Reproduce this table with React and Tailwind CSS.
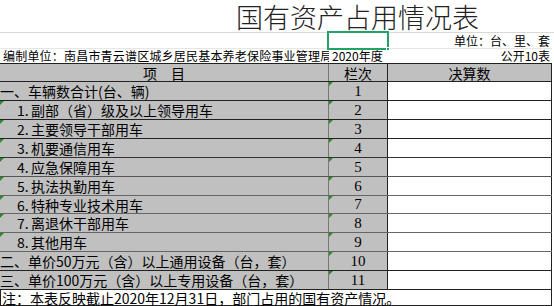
import React from "react";

const rows = [
  { label: "一、车辆数合计(台、辆)", no: "1", h: "h-[18px]", line: "border-[#222]" },
  { label: "1.副部（省）级及以上领导用车", no: "2", sub: true, h: "h-[18px]", line: "border-[#222]" },
  { label: "2.主要领导干部用车", no: "3", sub: true, h: "h-[18px]", line: "border-[#222]" },
  { label: "3.机要通信用车", no: "4", sub: true, h: "h-[18px]", line: "border-[#333]" },
  { label: "4.应急保障用车", no: "5", sub: true, h: "h-[18px]", line: "border-[#555]" },
  { label: "5.执法执勤用车", no: "6", sub: true, h: "h-[18px]", line: "border-[#666]" },
  { label: "6.特种专业技术用车", no: "7", sub: true, h: "h-[17px]", line: "border-[#666]" },
  { label: "7.离退休干部用车", no: "8", sub: true, h: "h-[18px]", line: "border-[#666]" },
  { label: "8.其他用车", no: "9", sub: true, h: "h-[18px]", line: "border-[#666]" },
  { label: "二、单价50万元（含）以上通用设备（台，套）", no: "10", h: "h-[18px]", line: "border-[#222]" },
  { label: "三、单价100万元（含）以上专用设备（台，套）", no: "11", h: "h-[18px]", line: "border-[#222]" },
];

const Mark = () => (
  <span className="absolute left-0 top-0 w-0 h-0 border-t-[4px] border-r-[4px] border-t-[#2a8a2a] border-r-transparent" />
);

export default function App() {
  return (
    <div className="relative w-[554px] h-[306px] overflow-hidden bg-white text-black font-['Noto_Sans_CJK_SC',sans-serif]">
      {/* Title */}
      <div className="h-[33px] border-b border-[#d9d9d9] pl-[236px] flex items-center text-[27px] leading-none text-[#222] font-light whitespace-nowrap">
        国有资产占用情况表
      </div>

      {/* Unit row */}
      <div className="h-[16px] border-b border-[#e6e6e6] w-[552px] flex items-center justify-end pr-[2px] text-[12px] leading-none">
        单位：台、里、套
      </div>

      {/* Compiler row */}
      <div className="h-[14px] w-[552px] flex items-center text-[12px] leading-none whitespace-nowrap">
        <div className="w-[329px] overflow-hidden pl-[3px] tracking-[0.2px]">编制单位：南昌市青云谱区城乡居民基本养老保险事业管理局</div>
        <div className="w-[59px] pl-[3px]">2020年度</div>
        <div className="flex-1 text-right pr-[2px]">公开10表</div>
      </div>

      {/* Header */}
      <div className="w-[552px] flex border-t border-b border-[#222] bg-[#c0c0c0] text-[14px] leading-none h-[19px]">
        <div className="w-[329px] border-r border-[#777] flex items-center justify-center">项　目</div>
        <div className="w-[59px] border-r border-[#222] flex items-center justify-center">栏次</div>
        <div className="w-[164px] border-r border-[#222] flex items-center justify-center">决算数</div>
      </div>

      {/* Data rows */}
      {rows.map((r) => (
        <div key={r.no} className={`w-[552px] flex border-b ${r.line} text-[14px] leading-none`}>
          <div className={`relative w-[329px] ${r.h} bg-[#c0c0c0] border-r border-[#777] flex items-center whitespace-nowrap ${r.sub ? "pl-[17px]" : "pl-0"}`}>
            {r.sub && <Mark />}
            {r.sub ? (
              <>
                <span className="w-[14px]">{r.label.slice(0, 2)}</span>
                {r.label.slice(2)}
              </>
            ) : (
              r.label
            )}
          </div>
          <div className={`relative w-[59px] ${r.h} bg-[#c0c0c0] border-r border-[#222] flex items-center justify-center font-['Liberation_Serif',serif] text-[15px]`}>
            <Mark />
            {r.no}
          </div>
          <div className={`w-[164px] ${r.h} bg-white border-r border-[#222]`} />
        </div>
      ))}

      {/* Note */}
      <div className="w-[552px] h-[16px] border-l border-r border-b border-[#222] flex items-center pl-[1px] text-[14px] leading-none whitespace-nowrap">
        注：本表反映截止2020年12月31日，部门占用的国有资产情况。
      </div>

      {/* Selected cell */}
      <div className="absolute left-[327px] top-[31px] w-[62px] h-[19px] border-2 border-[#21a366]">
        <span className="absolute -right-[3px] -bottom-[3px] w-[4px] h-[4px] bg-[#21a366] border border-white" />
      </div>
    </div>
  );
}
